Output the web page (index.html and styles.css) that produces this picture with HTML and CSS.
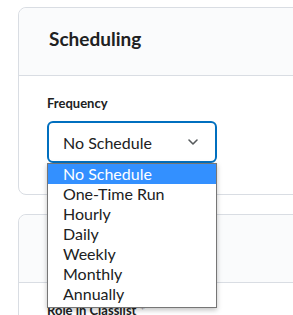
FILE: index.html
```html
<!DOCTYPE html>
<html lang="en">

<head>
    <meta charset="UTF-8">
    <title>Scheduling</title>
    <link rel="stylesheet" href="styles.css">
</head>

<body>
    <section class="card card-schedule">
        <header class="card-header">
            <h2>Scheduling</h2>
        </header>
        <div class="card-body">
            <label class="field-label">Frequency</label>
            <div class="select-wrap">
                <div class="select-box">
                    <span>No Schedule</span>
                    <svg class="chevron" width="12" height="8" viewBox="0 0 12 8">
                        <path d="M2 2 L6 6 L10 2" fill="none" stroke="#565a5c" stroke-width="1.6"
                            stroke-linecap="round" stroke-linejoin="round" />
                    </svg>
                </div>
                <ul class="select-menu">
                    <li class="selected">No Schedule</li>
                    <li>One-Time Run</li>
                    <li>Hourly</li>
                    <li>Daily</li>
                    <li>Weekly</li>
                    <li>Monthly</li>
                    <li>Annually</li>
                </ul>
            </div>
        </div>
    </section>

    <section class="card card-role">
        <header class="card-header"></header>
        <div class="card-body">
            <label class="field-label">Role in Classlist <span class="req">*</span></label>
        </div>
    </section>
</body>

</html>
```

FILE: styles.css
```css
body {
    font-family: Lato, "Open Sans", sans-serif;
    margin: 0;
    padding: 7px 0 0 18px;
    background: #fff;
    color: #202122;
    overflow: hidden;
    height: 315px;
}

.card {
    width: 320px;
    border: 1px solid #d9dde3;
    border-radius: 8px;
    background: #fff;
    box-sizing: border-box;
}

.card-role {
    margin-top: 19px;
}

.card-header {
    height: 68px;
    box-sizing: border-box;
    padding: 0 0 6px 30px;
    display: flex;
    align-items: center;
    background: #fafbfc;
    border-bottom: 1px solid #d9dde3;
    border-radius: 8px 8px 0 0;
}

.card-header h2 {
    margin: 0;
    font-size: 19px;
    font-weight: 700;
    color: #202122;
}

.card-body {
    padding: 19px 0 31px 28px;
}

.field-label {
    display: block;
    font-size: 13px;
    font-weight: 700;
    color: #202122;
    margin-bottom: 10px;
}

.req {
    color: #6e7376;
    font-weight: 400;
}

.select-wrap {
    position: relative;
    width: 170px;
}

.select-box {
    height: 42px;
    box-sizing: border-box;
    border: 2px solid #006fbf;
    border-radius: 6px;
    padding: 0 14px;
    display: flex;
    align-items: center;
    justify-content: space-between;
    font-size: 16px;
    color: #202122;
}

.chevron {
    margin-right: 2px;
}

.select-menu {
    position: absolute;
    top: 42px;
    left: 0;
    width: 170px;
    box-sizing: border-box;
    margin: 0;
    padding: 0 0 3px 0;
    list-style: none;
    background: #fff;
    border: 1px solid #767676;
    box-shadow: 0 2px 5px rgba(0, 0, 0, 0.25);
    z-index: 10;
}

.select-menu li {
    height: 20px;
    line-height: 20px;
    padding-left: 15px;
    font-size: 16px;
    color: #202122;
}

.select-menu li.selected {
    background: #3390ff;
    color: #fff;
}
```
